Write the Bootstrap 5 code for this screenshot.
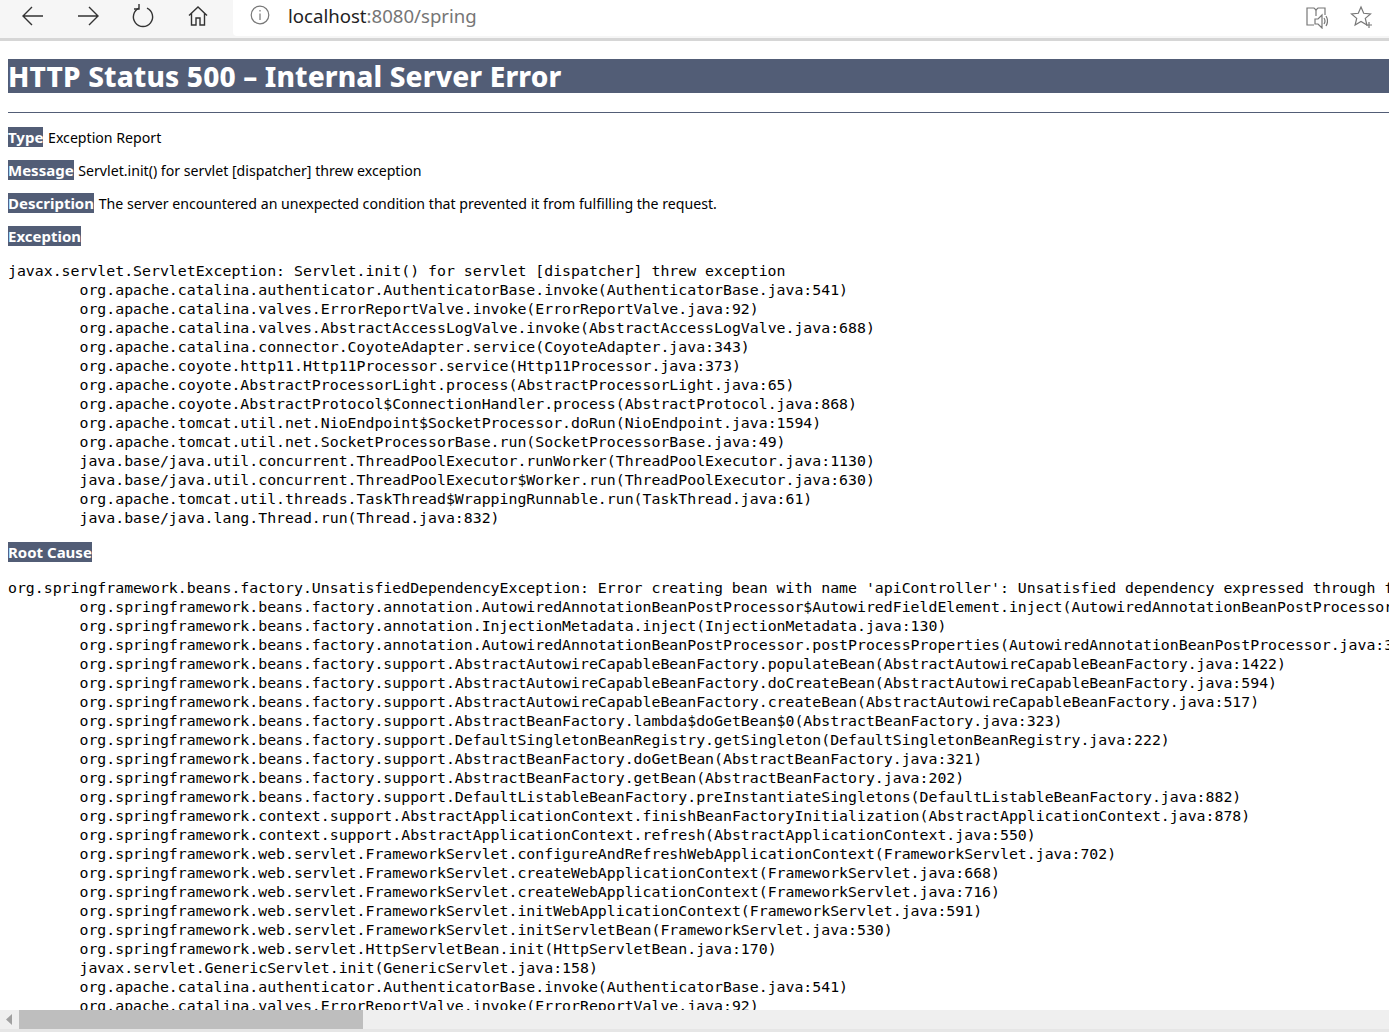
<!DOCTYPE html>
<html lang="en">
<head>
<meta charset="utf-8">
<title>HTTP Status 500 – Internal Server Error</title>
<link href="https://cdn.jsdelivr.net/npm/bootstrap@5.3.0/dist/css/bootstrap.min.css" rel="stylesheet">
<style>
html,body{height:100%;overflow:hidden;background:#fff}
body{font-family:"Noto Sans",sans-serif;color:#000}
.app-shell{height:100vh}
.chrome-bar{height:41px;background:#f6f6f6;border-bottom:3px solid #d6d6d6}
.nav-glyph{width:55px;height:32px}
.nav-lead{margin-left:5px}
.addr-box{background:#fff;height:36px;border-bottom-left-radius:4px;margin-left:8px;padding-left:16px;font-size:18.6px;line-height:32px;color:#767676}
.addr-box b{font-weight:400;color:#222}
.addr-text{margin-left:17px}
.tool-area{background:#fff;height:36px;padding-right:4px}
.tool-glyph{height:34px;width:46px}
.page-pane{min-height:0;overflow:hidden;padding:18px 0 0 8px;white-space:nowrap}
.err-title{background:#525d76;color:#fff;font-family:"Noto Sans",sans-serif;font-weight:800;font-size:28px;line-height:34px;height:34px;margin:0 0 19px;letter-spacing:.13px}
.err-rule{height:1px;background:#525d76;border:0;opacity:1;margin:0 0 15px}
.err-line{font-size:14.15px;line-height:18px;margin:0 0 15px;height:18px}
.err-tag{background:#525d76;color:#fff;font-weight:700;font-size:15px;margin-right:1px}
.err-label{line-height:18px;height:18px;margin:0 0 17px}
.err-label-root{margin-bottom:18px}
.trace{font-family:"DejaVu Sans Mono","Liberation Mono",monospace;font-size:14.85px;line-height:19px;margin:0 0 15px;overflow:visible;color:#000}
.scroll-strip{height:22px;background:#efefef;border-bottom:3px solid #e6e6e6}
.scroll-arrow{width:19px}
.scroll-thumb{width:344px;height:19px;background:#bebebe}
</style>
</head>
<body>
<div class="app-shell d-flex flex-column">
  <div class="chrome-bar d-flex align-items-start flex-shrink-0">
    <div class="nav-glyph nav-lead d-flex align-items-center justify-content-center"><svg width="24" height="22" viewBox="0 0 24 22" fill="none" stroke="#333" stroke-width="1.4"><path d="M22 11H2M11 2l-9 9 9 9"/></svg></div>
    <div class="nav-glyph d-flex align-items-center justify-content-center"><svg width="24" height="22" viewBox="0 0 24 22" fill="none" stroke="#333" stroke-width="1.4"><path d="M2 11h20M13 2l9 9-9 9"/></svg></div>
    <div class="nav-glyph d-flex align-items-center justify-content-center"><svg width="24" height="24" viewBox="0 0 24 24" fill="none" stroke="#333" stroke-width="1.4"><path d="M8 4.2a9.6 9.6 0 1 0 8 0"/><path d="M8 0v5H3"/></svg></div>
    <div class="nav-glyph d-flex align-items-center justify-content-center"><svg width="22" height="22" viewBox="0 0 22 22" fill="none" stroke="#333" stroke-width="1.4"><path d="M2 10.500 11 2l9 8.500M4.500 8.500V20h4.500v-7h4v7h4.500V8.500"/></svg></div>
    <div class="addr-box flex-grow-1 d-flex align-items-start">
      <svg class="mt-1" width="22" height="22" viewBox="0 0 22 22" fill="none" stroke="#777" stroke-width="1.2"><circle cx="11" cy="11" r="8.800"/><path d="M11 9.500V16M11 6v1.500"/></svg>
      <span class="addr-text"><b>localhost</b>:8080/spring</span>
    </div>
    <div class="tool-area d-flex">
      <div class="tool-glyph d-flex align-items-center justify-content-center"><svg width="24" height="24" viewBox="0 0 24 24" fill="none" stroke="#777" stroke-width="1.200"><path d="M10 20H3V3h7l2 2 2-2h7v7"/><path d="M12 5v6"/><path d="M11 14h3l4-4v13l-4-4h-3zM20 13q2 3 0 6M22 11q3 5 0 10"/></svg></div>
      <div class="tool-glyph d-flex align-items-center justify-content-center"><svg width="24" height="24" viewBox="0 0 24 24" fill="none" stroke="#777" stroke-width="1.200"><path d="M11 2l2.700 6.300 6.800.7-5.200 4.400 1.600 6.600L11 16.500 5.100 20l1.600-6.600L1.500 9l6.800-.7z"/><path d="M19 17v6M16 20h6"/></svg></div>
    </div>
  </div>
  <main class="page-pane flex-grow-1">
    <h1 class="err-title">HTTP Status 500 – Internal Server Error</h1>
    <hr class="err-rule">
    <p class="err-line"><span class="err-tag">Type</span> Exception Report</p>
    <p class="err-line"><span class="err-tag">Message</span> Servlet.init() for servlet [dispatcher] threw exception</p>
    <p class="err-line"><span class="err-tag">Description</span> The server encountered an unexpected condition that prevented it from fulfilling the request.</p>
    <p class="err-label"><span class="err-tag">Exception</span></p>
    <pre class="trace">javax.servlet.ServletException: Servlet.init() for servlet [dispatcher] threw exception
	org.apache.catalina.authenticator.AuthenticatorBase.invoke(AuthenticatorBase.java:541)
	org.apache.catalina.valves.ErrorReportValve.invoke(ErrorReportValve.java:92)
	org.apache.catalina.valves.AbstractAccessLogValve.invoke(AbstractAccessLogValve.java:688)
	org.apache.catalina.connector.CoyoteAdapter.service(CoyoteAdapter.java:343)
	org.apache.coyote.http11.Http11Processor.service(Http11Processor.java:373)
	org.apache.coyote.AbstractProcessorLight.process(AbstractProcessorLight.java:65)
	org.apache.coyote.AbstractProtocol$ConnectionHandler.process(AbstractProtocol.java:868)
	org.apache.tomcat.util.net.NioEndpoint$SocketProcessor.doRun(NioEndpoint.java:1594)
	org.apache.tomcat.util.net.SocketProcessorBase.run(SocketProcessorBase.java:49)
	java.base/java.util.concurrent.ThreadPoolExecutor.runWorker(ThreadPoolExecutor.java:1130)
	java.base/java.util.concurrent.ThreadPoolExecutor$Worker.run(ThreadPoolExecutor.java:630)
	org.apache.tomcat.util.threads.TaskThread$WrappingRunnable.run(TaskThread.java:61)
	java.base/java.lang.Thread.run(Thread.java:832)
</pre>
    <p class="err-label err-label-root"><span class="err-tag">Root Cause</span></p>
    <pre class="trace">org.springframework.beans.factory.UnsatisfiedDependencyException: Error creating bean with name 'apiController': Unsatisfied dependency expressed through f
	org.springframework.beans.factory.annotation.AutowiredAnnotationBeanPostProcessor$AutowiredFieldElement.inject(AutowiredAnnotationBeanPostProcessor
	org.springframework.beans.factory.annotation.InjectionMetadata.inject(InjectionMetadata.java:130)
	org.springframework.beans.factory.annotation.AutowiredAnnotationBeanPostProcessor.postProcessProperties(AutowiredAnnotationBeanPostProcessor.java:3
	org.springframework.beans.factory.support.AbstractAutowireCapableBeanFactory.populateBean(AbstractAutowireCapableBeanFactory.java:1422)
	org.springframework.beans.factory.support.AbstractAutowireCapableBeanFactory.doCreateBean(AbstractAutowireCapableBeanFactory.java:594)
	org.springframework.beans.factory.support.AbstractAutowireCapableBeanFactory.createBean(AbstractAutowireCapableBeanFactory.java:517)
	org.springframework.beans.factory.support.AbstractBeanFactory.lambda$doGetBean$0(AbstractBeanFactory.java:323)
	org.springframework.beans.factory.support.DefaultSingletonBeanRegistry.getSingleton(DefaultSingletonBeanRegistry.java:222)
	org.springframework.beans.factory.support.AbstractBeanFactory.doGetBean(AbstractBeanFactory.java:321)
	org.springframework.beans.factory.support.AbstractBeanFactory.getBean(AbstractBeanFactory.java:202)
	org.springframework.beans.factory.support.DefaultListableBeanFactory.preInstantiateSingletons(DefaultListableBeanFactory.java:882)
	org.springframework.context.support.AbstractApplicationContext.finishBeanFactoryInitialization(AbstractApplicationContext.java:878)
	org.springframework.context.support.AbstractApplicationContext.refresh(AbstractApplicationContext.java:550)
	org.springframework.web.servlet.FrameworkServlet.configureAndRefreshWebApplicationContext(FrameworkServlet.java:702)
	org.springframework.web.servlet.FrameworkServlet.createWebApplicationContext(FrameworkServlet.java:668)
	org.springframework.web.servlet.FrameworkServlet.createWebApplicationContext(FrameworkServlet.java:716)
	org.springframework.web.servlet.FrameworkServlet.initWebApplicationContext(FrameworkServlet.java:591)
	org.springframework.web.servlet.FrameworkServlet.initServletBean(FrameworkServlet.java:530)
	org.springframework.web.servlet.HttpServletBean.init(HttpServletBean.java:170)
	javax.servlet.GenericServlet.init(GenericServlet.java:158)
	org.apache.catalina.authenticator.AuthenticatorBase.invoke(AuthenticatorBase.java:541)
	org.apache.catalina.valves.ErrorReportValve.invoke(ErrorReportValve.java:92)
</pre>
  </main>
  <div class="scroll-strip d-flex flex-shrink-0">
    <div class="scroll-arrow d-flex align-items-center justify-content-center"><svg width="7" height="11" viewBox="0 0 7 11"><path d="M6 0v11L0 5.500z" fill="#a0a0a0"/></svg></div>
    <div class="scroll-thumb"></div>
  </div>
</div>
<script src="https://cdn.jsdelivr.net/npm/bootstrap@5.3.0/dist/js/bootstrap.bundle.min.js"></script>
</body>
</html>
